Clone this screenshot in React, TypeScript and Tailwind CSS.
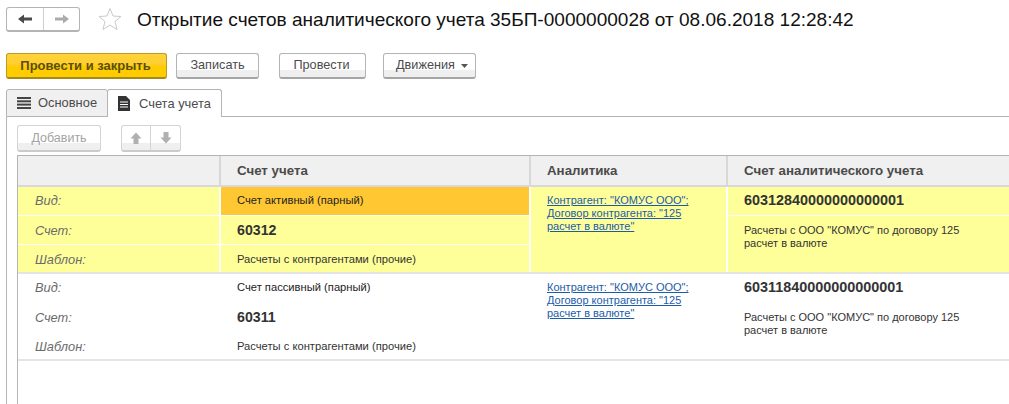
import React from "react";

const btn = "h-[26px] rounded-[3px] border border-[#b4b4b4] border-b-[2px] border-b-[#a5a5a5] text-[12.7px] text-[#4b4b4b] flex items-center justify-center bg-[linear-gradient(#fff_0,#fff_70%,#efefef_70%,#efefef_100%)]";

function Arrow({ dir, color }: { dir: "l" | "r"; color: string }) {
  const rot = { l: 0, r: 180 }[dir];
  return (
    <svg width="14" height="14" viewBox="0 0 14 14" style={{ transform: `rotate(${rot}deg)` }}>
      <path d="M0 7 L6 2.5 V5.5 H14 V8.5 H6 V11.5 Z" fill={color} />
    </svg>
  );
}

function BlockArrow({ down, color }: { down?: boolean; color: string }) {
  return (
    <svg width="14" height="14" viewBox="0 0 14 14" style={{ transform: down ? "rotate(180deg)" : undefined }}>
      <path d="M7 1.5 L12.5 7.5 H9.5 V13 H4.5 V7.5 H1.5 Z" fill={color} />
    </svg>
  );
}

function Row({ first, kind, code, acc, desc }: { first?: boolean; kind: string; code: string; acc: string; desc: string }) {
  const bg = first ? "bg-[#ffff99]" : "bg-white";
  const line = first ? "border-white" : "border-transparent";
  const cell = "flex items-center border-r-[2px] " + line;
  const label = " pl-[17px] italic text-[#6b6b6b] text-[12.8px]";
  return (
    <div className={"grid grid-cols-[203px_310px_197px_1fr] grid-rows-[28px_29px_28px] border-b-[2px] border-[#e4e4e4] " + bg}>
      <div className={"row-start-1 col-start-1 " + cell + label}>Вид:</div>
      <div className={"row-start-2 col-start-1 border-t " + line + " " + cell + label + " pt-[1px]"}>Счет:</div>
      <div className={"row-start-3 col-start-1 border-t " + line + " " + cell + label + " pt-[2px]"}>Шаблон:</div>
      <div className={"row-start-1 col-start-2 " + cell + " pl-[16px] pb-[1px] text-[11.2px] text-[#222] " + (first ? "bg-[#ffc732]" : "")}>{kind}</div>
      <div className={"row-start-2 col-start-2 border-t " + line + " " + cell + " pl-[16px] pt-[1px] font-bold text-[14.2px] text-[#333]"}>{code}</div>
      <div className={"row-start-3 col-start-2 border-t " + line + " " + cell + " pl-[16px] pt-[1px] text-[11.2px] text-[#333]"}>Расчеты с контрагентами (прочие)</div>
      <div className={"row-span-3 col-start-3 border-r-[2px] pl-[16px] pt-[7px] " + line}>
        <a className="block w-[160px] text-[11px] leading-[13px] text-[#1c5ca8] underline">Контрагент: "КОМУС ООО"; Договор контрагента: "125 расчет в валюте"</a>
      </div>
      <div className={"col-start-4 row-start-1 pl-[16px] flex items-center font-bold text-[14.4px] text-[#333]"}>{acc}</div>
      <div className={"col-start-4 row-start-2 row-span-2 border-t pl-[16px] pt-[8px] text-[11px] leading-[13px] text-[#333] " + line}>
        <div className="w-[228px]">{desc}</div>
      </div>
    </div>
  );
}

export default function App() {
  return (
    <div className="w-[1009px] h-[404px] overflow-hidden bg-white flex flex-col font-['Liberation_Sans',Arial,sans-serif]">
      <div className="flex items-center h-[24px] mt-[7px] ml-[6px]">
        <div className="w-[74px] h-[25px] rounded-[3px] border border-[#b4b4b4] border-b-[2px] flex">
          <div className="w-[37px] border-r border-[#cfcfcf] flex items-center justify-center"><Arrow dir="l" color="#4a4a4a" /></div>
          <div className="flex-1 flex items-center justify-center"><Arrow dir="r" color="#ababab" /></div>
        </div>
        <svg className="ml-[18px]" width="24" height="24" viewBox="0 0 24 24" fill="none" stroke="#c9c9c9" strokeWidth="1">
          <path d="M12 1.5 L15 9 L23 9.5 L17 14.5 L19 22.5 L12 18 L5 22.5 L7 14.5 L1 9.5 L9 9 Z" />
        </svg>
        <div className="ml-[15px] mt-[2px] text-[19.05px] text-[#111] whitespace-nowrap">Открытие счетов аналитического учета 35БП-0000000028 от 08.06.2018 12:28:42</div>
      </div>

      <div className="flex mt-[22px] ml-[6px] h-[27px]">
        <div className="w-[161px] h-[26px] rounded-[3px] border border-[#b99d1f] border-b-[2px] border-b-[#a58a1a] bg-[linear-gradient(#ffd23c,#ffcf2e_45%,#ffcc00_55%,#ffcc00)] text-[13px] font-bold text-[#5b4d10] flex items-center justify-center pr-[2px]">Провести и закрыть</div>
        <div className={btn + " w-[83px] ml-[9px]"}>Записать</div>
        <div className={btn + " w-[87px] ml-[20px] pr-[2px]"}>Провести</div>
        <div className={btn + " w-[93px] ml-[17px] pl-[5px]"}>
          Движения
          <svg className="ml-[6px]" width="7" height="4" viewBox="0 0 7 4"><path d="M0 0H7L3.5 4Z" fill="#555" /></svg>
        </div>
      </div>

      <div className="flex mt-[9px] ml-[6px] h-[28px]">
        <div className="w-[102px] h-[28px] rounded-t-[3px] border border-[#b4b4b4] bg-[#f0f0f0] flex items-center pl-[10px] text-[12.9px] text-[#4b4b4b]">
          <svg width="14" height="12" viewBox="0 0 14 12" fill="#444"><rect y="0" width="14" height="2" /><rect y="3.3" width="14" height="2" /><rect y="6.6" width="14" height="2" /><rect y="10" width="14" height="2" /></svg>
          <span className="ml-[7px]">Основное</span>
        </div>
        <div className="w-[115px] h-[28px] -ml-px rounded-t-[3px] border border-b-0 border-[#b4b4b4] bg-white flex items-center pl-[10px] text-[12.9px] text-[#4b4b4b]">
          <svg width="12" height="15" viewBox="0 0 12 15" fill="#333"><path d="M0 0H8L12 4V15H0Z" /><path d="M2 6H10M2 8.5H10M2 11H10" stroke="#fff" strokeWidth="1" /></svg>
          <span className="ml-[9px]">Счета учета</span>
        </div>
        <div className="flex-1 border-b border-[#b4b4b4]" />
      </div>

      <div className="flex-1 ml-[6px] border-l border-[#b4b4b4] pl-[10px] pt-[8px] flex flex-col min-h-0">
        <div className="flex h-[27px]">
          <div className="w-[84px] h-[27px] rounded-[3px] border border-[#d4d4d4] border-b-[2px] border-b-[#cbcbcb] text-[12.5px] text-[#a3a3a3] flex items-center justify-center bg-[linear-gradient(#fff_0,#fff_70%,#efefef_70%,#efefef_100%)]">Добавить</div>
          <div className="w-[60px] h-[27px] ml-[20px] rounded-[3px] border border-[#d4d4d4] border-b-[2px] border-b-[#cbcbcb] flex bg-[linear-gradient(#fff_0,#fff_70%,#efefef_70%,#efefef_100%)]">
            <div className="w-[29px] border-r border-[#d4d4d4] flex items-center justify-center"><BlockArrow color="#b0b0b0" /></div>
            <div className="flex-1 flex items-center justify-center"><BlockArrow down color="#b0b0b0" /></div>
          </div>
        </div>
        <div className="mt-[3px] flex-1 border-l border-t border-[#b4b4b4] min-h-0">
          <div className="grid grid-cols-[203px_310px_197px_1fr] h-[31px] bg-[#f0f0f0] border-b-[2px] border-[#d8d8d8] text-[13.3px] font-bold text-[#4b4b4b]">
            <div className="border-r-[2px] border-[#d8d8d8]" />
            <div className="border-r-[2px] border-[#d8d8d8] pl-[16px] flex items-center">Счет учета</div>
            <div className="border-r-[2px] border-[#d8d8d8] pl-[16px] flex items-center">Аналитика</div>
            <div className="pl-[16px] flex items-center">Счет аналитического учета</div>
          </div>
          <Row first kind="Счет активный (парный)" code="60312" acc="60312840000000000001" desc={'Расчеты с ООО "КОМУС" по договору 125 расчет в валюте'} />
          <Row kind="Счет пассивный (парный)" code="60311" acc="60311840000000000001" desc={'Расчеты с ООО "КОМУС" по договору 125 расчет в валюте'} />
        </div>
      </div>
    </div>
  );
}
